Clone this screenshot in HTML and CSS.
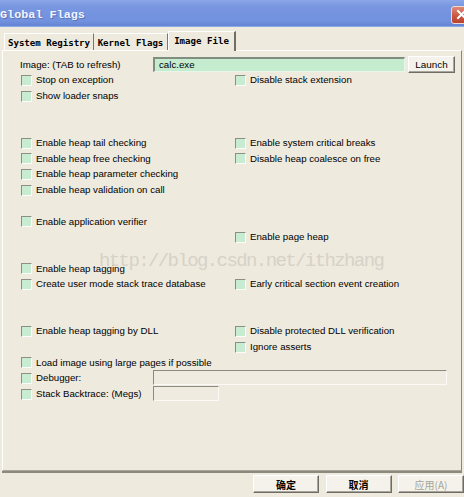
FILE: index.html
```html
<!DOCTYPE html>
<html>
<head>
<meta charset="utf-8">
<link rel="stylesheet" href="styles.css">
</head>
<body>
<div class="window">
  <div class="titlebar">
    <span class="title">Global Flags</span>
    <span class="close"><svg width="13" height="13" viewBox="0 0 13 13"><path d="M3 3 L10 10 M10 3 L3 10" stroke="#fff" stroke-width="2" stroke-linecap="square"/></svg></span>
  </div>
  <div class="tabs">
    <div class="tab t1">System Registry</div>
    <div class="tab t2">Kernel Flags</div>
    <div class="tab t3 active">Image File</div>
  </div>
  <div class="panel">
    <div class="image-row">
      <span class="image-label">Image: (TAB to refresh)</span>
      <span class="input green">calc.exe</span>
      <span class="btn launch">Launch</span>
    </div>
    <div class="flags">
      <div class="cell"><i class="cb"></i><span>Stop on exception</span></div>
      <div class="cell"><i class="cb"></i><span>Disable stack extension</span></div>
      <div class="cell"><i class="cb"></i><span>Show loader snaps</span></div>
      <div class="cell"></div>
      <div class="cell"></div><div class="cell"></div>
      <div class="cell"></div><div class="cell"></div>
      <div class="cell"><i class="cb"></i><span>Enable heap tail checking</span></div>
      <div class="cell"><i class="cb"></i><span>Enable system critical breaks</span></div>
      <div class="cell"><i class="cb"></i><span>Enable heap free checking</span></div>
      <div class="cell"><i class="cb"></i><span>Disable heap coalesce on free</span></div>
      <div class="cell"><i class="cb"></i><span>Enable heap parameter checking</span></div>
      <div class="cell"></div>
      <div class="cell"><i class="cb"></i><span>Enable heap validation on call</span></div>
      <div class="cell"></div>
      <div class="cell"></div><div class="cell"></div>
      <div class="cell"><i class="cb"></i><span>Enable application verifier</span></div>
      <div class="cell"></div>
      <div class="cell"></div>
      <div class="cell"><i class="cb"></i><span>Enable page heap</span></div>
      <div class="cell"></div><div class="cell"></div>
      <div class="cell"><i class="cb"></i><span>Enable heap tagging</span></div>
      <div class="cell"></div>
      <div class="cell"><i class="cb"></i><span>Create user mode stack trace database</span></div>
      <div class="cell"><i class="cb"></i><span>Early critical section event creation</span></div>
      <div class="cell"></div><div class="cell"></div>
      <div class="cell"></div><div class="cell"></div>
      <div class="cell"><i class="cb"></i><span>Enable heap tagging by DLL</span></div>
      <div class="cell"><i class="cb"></i><span>Disable protected DLL verification</span></div>
      <div class="cell"></div>
      <div class="cell"><i class="cb"></i><span>Ignore asserts</span></div>
      <div class="cell span"><i class="cb"></i><span>Load image using large pages if possible</span></div>
      <div class="cell span"><i class="cb"></i><span class="flabel">Debugger:</span><span class="input disabled debugger"></span></div>
      <div class="cell span"><i class="cb"></i><span class="flabel">Stack Backtrace: (Megs)</span><span class="input disabled megs"></span></div>
    </div>
    <div class="watermark">http://blog.csdn.net/ithzhang</div>
  </div>
  <div class="buttons">
    <span class="btn dlg bold">确定</span>
    <span class="btn dlg bold">取消</span>
    <span class="btn dlg grayed">应用(A)</span>
  </div>
</div>
</body>
</html>
```
FILE: styles.css
```css
html, body {
  margin: 0;
  padding: 0;
  width: 464px;
  height: 497px;
  overflow: hidden;
  background: #eeeade;
}
.window {
  width: 464px;
  height: 497px;
  display: flex;
  flex-direction: column;
  font-family: "Liberation Sans", Arial, sans-serif;
  font-size: 9.7px;
  color: #000;
}
.titlebar {
  height: 27px;
  box-sizing: border-box;
  display: flex;
  align-items: center;
  justify-content: space-between;
  background: linear-gradient(#8ba7e8, #7896e0 25%, #7291de 80%, #6585d5);
  border-bottom: 1px solid #8eaae6;
}
.title {
  font-family: "Liberation Mono", "Courier New", monospace;
  font-weight: bold;
  font-size: 11.8px;
  color: #f2f5ff;
  text-shadow: 1px 1px 0 #5a74b8;
  margin-left: 0;
  margin-top: 3px;
}
.close {
  width: 20px;
  height: 18px;
  box-sizing: border-box;
  margin-right: -7px;
  margin-top: 3px;
  border: 1px solid #f0d8d0;
  border-radius: 3px;
  background: linear-gradient(#de8a78, #c8523e 60%, #b84430);
  display: flex;
  align-items: center;
  justify-content: center;
}
.tabs {
  height: 23px;
  display: flex;
  align-items: flex-end;
  padding-left: 4px;
  position: relative;
  z-index: 2;
}
.tab {
  box-sizing: border-box;
  height: 17px;
  font-family: "DejaVu Sans Mono", "Liberation Mono", monospace;
  font-weight: bold;
  font-size: 9.1px;
  display: flex;
  align-items: center;
  justify-content: center;
  border-left: 1px solid #fff;
  border-top: 1px solid #fff;
  border-right: 1px solid #7a786e;
  padding-top: 1px;
}
.t1 { width: 90px; }
.t2 { width: 74px; border-left: none; }
.t3 { width: 68px; }
.tab.active {
  height: 20px;
  margin-bottom: -1px;
  background: #eeeade;
  border-right: 2px solid #6f6d64;
  padding-top: 0;
  padding-bottom: 2px;
}
.panel {
  position: relative;
  box-sizing: border-box;
  height: 421px;
  margin: 0 2px;
  border-top: 1px solid #fff;
  border-left: 1px solid #fff;
  border-right: 1px solid #8a887e;
  border-bottom: 1px solid #a8a598;
  box-shadow: 0 2px 0 #8c897e;
  padding: 5px 0 0 18px;
}
.image-row {
  height: 16px;
  display: flex;
  align-items: center;
  margin-left: -1px;
}
.image-label {
  width: 133px;
}
.input {
  box-sizing: border-box;
  height: 15px;
  border: 1px solid;
  border-color: #8c8a80 #fbfaf6 #fbfaf6 #8c8a80;
  display: flex;
  align-items: center;
  padding-left: 4px;
}
.input.green {
  width: 252px;
  background: #c6ecd0;
  border-top-width: 2px;
  border-left-width: 2px;
  border-color: #7f8e80 #e8f6ea #e8f6ea #7f8e80;
}
.btn {
  box-sizing: border-box;
  display: flex;
  align-items: center;
  justify-content: center;
  background: #f4f2ea;
  border: 1px solid;
  border-color: #ffffff #6e6c64 #6e6c64 #ffffff;
  box-shadow: inset -1px -1px 0 #a8a69c;
}
.launch {
  width: 47px;
  height: 17px;
  margin-left: 3px;
  margin-top: 1px;
  font-size: 9.9px;
}
.flags {
  display: grid;
  grid-template-columns: 214px 1fr;
  grid-auto-rows: 15.7px;
}
.cell {
  display: flex;
  align-items: center;
  white-space: nowrap;
}
.cell.span {
  grid-column: 1 / -1;
}
.cb {
  display: block;
  width: 11px;
  height: 11px;
  box-sizing: border-box;
  background: #c8ecd2;
  border: 1px solid;
  border-color: #8e8e88 #fdfdfb #fdfdfb #8e8e88;
  margin-right: 4px;
  margin-top: 1px;
  flex: none;
}
.flabel {
  width: 117px;
}
.input.disabled {
  background: #efebe0;
}
.debugger { width: 294px; }
.megs { width: 66px; }
.watermark {
  position: absolute;
  left: 96px;
  top: 199px;
  font-family: "Liberation Mono", "Courier New", monospace;
  font-size: 19px;
  letter-spacing: -1.6px;
  color: #d6d2c7;
  white-space: nowrap;
  pointer-events: none;
}
.buttons {
  height: 26px;
  box-sizing: border-box;
  padding-top: 4px;
  display: flex;
  justify-content: flex-end;
  gap: 6.5px;
}
.btn.dlg {
  width: 66px;
  height: 18px;
  font-family: "Noto Sans CJK SC", sans-serif;
  font-size: 10px;
}
.bold { font-weight: bold; }
.grayed { color: #a6a498; }
```
